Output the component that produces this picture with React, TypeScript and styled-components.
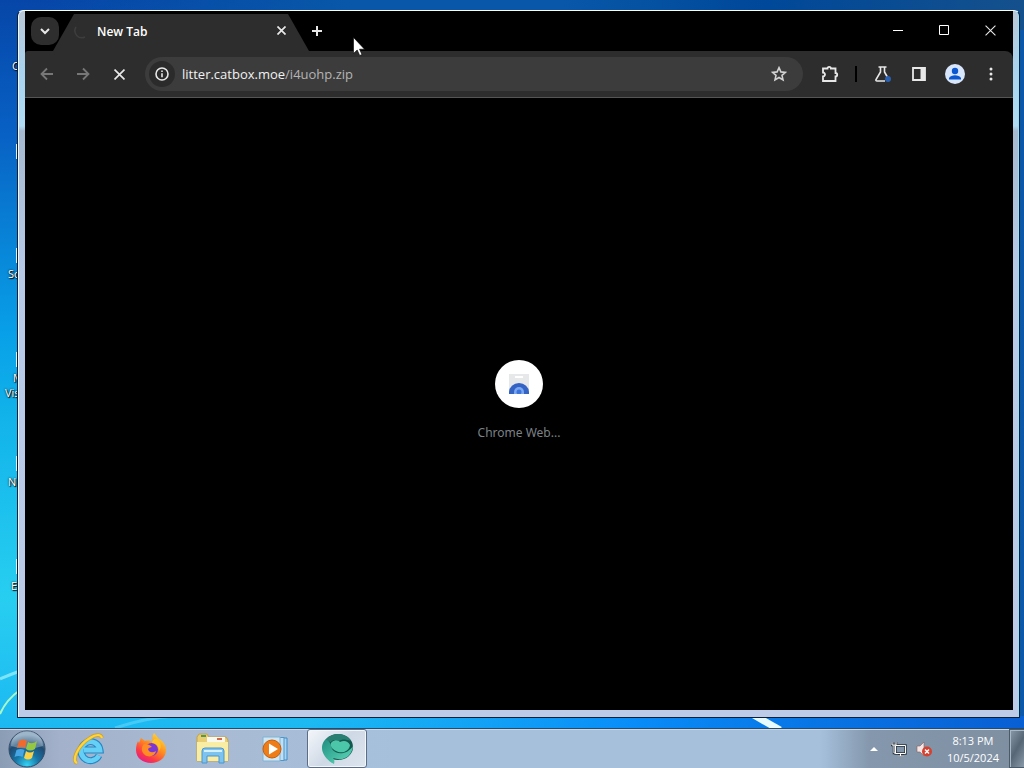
import React from 'react';
import styled, { createGlobalStyle, css } from 'styled-components';

const GlobalStyle = createGlobalStyle`
  *, *::before, *::after { box-sizing: border-box; }
  body { margin: 0; font-family: "Open Sans", "Noto Sans", sans-serif; font-size: 12px; }
  button, input { font: inherit; }
`;

const Screen = styled.div`
  display: flex;
  flex-direction: column;
  height: 100vh;
  overflow: hidden;
`;

const Desktop = styled.main`
  position: relative;
  flex: 1;
  overflow: hidden;
  background:
    linear-gradient(90deg, transparent 30%, rgba(4, 130, 250, 0.8) 62%, rgba(8, 96, 216, 0.9) 100%) bottom / 100% 12px no-repeat,
    linear-gradient(90deg, transparent 4%, #0857a8 34%, #0857a8 55%, #004899 75%, #14508c 100%) top / 100% 30px no-repeat,
    linear-gradient(90deg, transparent 60%, #0d57a8 100%),
    linear-gradient(180deg, #0646a8 0%, #0860c4 18%, #0878d0 28%, #08a0e8 46%, #12b4ea 58%, #28cef0 82%, #1cb8f2 100%);
`;

const Wallpaper = styled.svg`
  position: absolute;
  left: 0;
  bottom: 0;
  width: 100%;
  height: 100px;
`;

const Shortcut = styled.div<{ $x: number; $y: number }>`
  position: absolute;
  left: ${p => p.$x}px;
  top: ${p => p.$y}px;
  color: #fff;
  font-size: 11px;
  line-height: 14px;
  text-shadow: 1px 1px 1px #000, 0 0 2px #000;
`;

const ShortcutEdge = styled.div<{ $y: number }>`
  position: absolute;
  left: 16px;
  top: ${p => p.$y}px;
  width: 2px;
  height: 15px;
  background: #dff2fb;
`;

const Window = styled.section`
  position: absolute;
  inset: 10px 4px 10px 17px;
  display: flex;
  flex-direction: column;
  padding: 0 6px 7px 7px;
  border: 1px solid #0c2038;
  border-top-color: #fff;
  border-radius: 6px 6px 0 0;
  background: linear-gradient(180deg, #b9c7d6 0, #a9d3ef 60px, #b0dcf5 115px, #a5b9d0 120px, #b6cae8 260px, #bccbe8 100%);
  box-shadow: inset 1px 0 0 #eef6fd, inset -1px 0 0 #8fe0f8;
`;

const TitleBar = styled.header`
  display: flex;
  align-items: flex-start;
  height: 40px;
  padding-left: 6px;
  background: #000;
`;

const iconButton = css`
  display: flex;
  align-items: center;
  justify-content: center;
  flex: none;
  padding: 0;
  border: 0;
  background: none;
  color: #e8e8e8;
`;

const TabSearch = styled.button`
  ${iconButton}
  width: 28px;
  height: 28px;
  margin-top: 6px;
  border-radius: 10px;
  background: #2e2e2e;
`;

const Tab = styled.div`
  display: flex;
  align-items: center;
  width: 256px;
  height: 37px;
  margin: 3px 0 0 -6px;
  padding: 0 18px 4px 20px;
  background: #2d2d2d;
  clip-path: polygon(21px 0, 235px 0, 256px 100%, 0 100%);
  color: #fff;
`;

const TabTitle = styled.span`
  flex: 1;
  padding: 2px 0 0 8px;
  font-weight: 600;
  line-height: 16px;
`;

const TabButton = styled.button`
  ${iconButton}
  width: 20px;
  height: 20px;
`;

const NewTab = styled.button`
  ${iconButton}
  width: 28px;
  height: 28px;
  margin: 6px 0 0 -6px;
`;

const Caption = styled.div`
  display: flex;
  margin-left: auto;
`;

const CaptionButton = styled.button`
  ${iconButton}
  width: 46px;
  height: 38px;
`;

const ToolbarBack = styled.div`
  background: #000;
`;

const Toolbar = styled.nav`
  display: flex;
  align-items: center;
  height: 47px;
  padding: 0 8px;
  border-bottom: 1px solid #555;
  border-radius: 3px 8px 0 0;
  background: #2d2d2d;
`;

const ToolButton = styled.button<{ $dim?: boolean }>`
  ${iconButton}
  width: 28px;
  height: 28px;
  margin-right: 8px;
  color: ${p => (p.$dim ? '#777' : '#e8e8e8')};
  &:last-child { margin-right: 0; }
`;

const AddressBar = styled.div`
  position: relative;
  display: flex;
  flex: 1;
  align-items: center;
  height: 34px;
  margin: 0 13px 0 4px;
  padding: 0 14px 0 4px;
  border-radius: 17px;
  background: #3c3c3c;
`;

const SiteInfo = styled.button`
  ${iconButton}
  width: 26px;
  height: 26px;
  border-radius: 50%;
  background: #2b2b2b;
`;

const Url = styled.a`
  flex: 1;
  padding-left: 7px;
  color: #b4b4b4;
  font-size: 13px;
  line-height: 18px;
  text-decoration: none;
`;

const Host = styled.span`
  color: #f1f1f1;
`;

const Divider = styled.span`
  width: 2px;
  height: 16px;
  margin: 0 12px 0 3px;
  background: #000;
`;

const Page = styled.div`
  display: flex;
  flex: 1;
  flex-direction: column;
  align-items: center;
  justify-content: center;
  padding-bottom: 7px;
  background: #000;
`;

const WebStore = styled.a`
  display: flex;
  flex-direction: column;
  align-items: center;
  gap: 16px;
  color: #7d8287;
  font-family: "Noto Sans", sans-serif;
  font-size: 12px;
  line-height: 18px;
  text-decoration: none;
`;

const StoreIcon = styled.span`
  display: flex;
  align-items: center;
  justify-content: center;
  width: 48px;
  height: 48px;
  border-radius: 50%;
  background: #fff;
`;

const Pointer = styled.svg`
  position: absolute;
  left: 335px;
  top: 26px;
`;

const Taskbar = styled.footer`
  display: flex;
  align-items: stretch;
  height: 40px;
  border-top: 1px solid #294b6b;
  background: linear-gradient(90deg, #8b9cb5 0, #a3b1ca 60px, #a9b9d2 180px, #a6c0dc 400px, #a6c0dc 820px, #8497ac 870px, #7f8fa1 100%);
  box-shadow: inset 0 1px 0 #c9d9e8;
`;

const StartButton = styled.button`
  ${iconButton}
  width: 54px;
  margin-right: 5px;
`;

const TaskButton = styled.button<{ $active?: boolean }>`
  ${iconButton}
  width: 60px;
  margin-right: 2px;
  ${p => p.$active && css`
    border: 1px solid #5d6d84;
    border-radius: 3px;
    background: linear-gradient(135deg, #f4f7fb, #cfd9e6 50%, #dde5ee);
    box-shadow: inset 0 0 0 1px #f3f7fb;
  `}
`;

const Tray = styled.div`
  display: flex;
  align-items: center;
  gap: 8px;
  margin-left: auto;
`;

const TrayButton = styled.button`
  ${iconButton}
  width: 17px;
  height: 18px;
`;

const Clock = styled.time`
  padding: 1px 2px 0 6px;
  color: #fff;
  font-size: 11px;
  line-height: 17px;
  text-align: center;
`;

const ShowDesktop = styled.button`
  width: 15px;
  align-self: stretch;
  padding: 0;
  border: 1px solid #4c5a68;
  border-right: 0;
  background: linear-gradient(120deg, #8b9aa9, #566675 50%, #8a9aa8);
  box-shadow: inset 1px 1px 0 #a9b8c6;
`;

const shortcuts = [
  { label: 'C', x: 12, y: 59 },
  { label: 'Sc', x: 8, y: 267 },
  { label: 'M', x: 13, y: 371 },
  { label: 'Vis', x: 5, y: 386 },
  { label: 'N', x: 8, y: 475 },
  { label: 'E', x: 11, y: 579 },
];

const edges = [144, 248, 352, 456, 559];

const Cross = ({ size, weight }: { size: number; weight: number }) => (
  <svg width={size} height={size} viewBox="0 0 10 10" fill="none" stroke="currentColor" strokeWidth={weight}>
    <path d="M.5.5l9 9M9.5.5l-9 9" />
  </svg>
);

const Arrow = ({ flip }: { flip?: boolean }) => (
  <svg width="14" height="14" viewBox="0 0 14 14" fill="none" stroke="currentColor" strokeWidth="1.8">
    <path d={flip ? 'M1 7h11M7 1.5L12.5 7 7 12.5' : 'M13 7H2M7 1.5L1.5 7 7 12.5'} />
  </svg>
);

const StartOrb = () => (
  <svg width="38" height="38" viewBox="0 0 38 38">
    <defs>
      <radialGradient id="orb" cx="50%" cy="95%" r="85%">
        <stop offset="0" stopColor="#35d3f5" />
        <stop offset=".4" stopColor="#1674a5" />
        <stop offset=".75" stopColor="#204a70" />
        <stop offset="1" stopColor="#7f9cb6" />
      </radialGradient>
    </defs>
    <circle cx="19" cy="19" r="18" fill="url(#orb)" stroke="#334d68" />
    <path d="M3 16a16 15 0 0132 0q-16 5-32 0z" fill="#d9e8f2" opacity=".35" />
    <path d="M11 11q4-3 8 0l-2 7q-4-2-8 0z" fill="#ef6a2c" />
    <path d="M20 12q4 3 9-1l-2 8q-5 3-9 0z" fill="#95c842" />
    <path d="M8.500 20q4-2 8 0l-2 7q-4-2-8 0z" fill="#47a5e4" />
    <path d="M18 21q4 3 8 0l-2 7q-4 3-8 0z" fill="#fbd146" />
  </svg>
);

const ExplorerE = () => (
  <svg width="34" height="34" viewBox="0 0 34 34" fill="none">
    <path d="M27 23.500A9.500 9.500 0 1128 18H12" stroke="#2486c4" strokeWidth="7" />
    <path d="M27 23.500A9.500 9.500 0 1128 18H12" stroke="#66cff5" strokeWidth="4.800" />
    <path d="M5 31C-1 29 6 13 18 6c6-4 11-4 12 0" stroke="#d79c14" strokeWidth="3.500" />
    <path d="M5 31C-1 29 6 13 18 6c6-4 11-4 12 0" stroke="#fbd63f" strokeWidth="2.200" />
  </svg>
);

const Firefox = () => (
  <svg width="32" height="34" viewBox="0 0 32 34">
    <defs>
      <linearGradient id="fox" x1=".85" y1="0" x2=".2" y2="1">
        <stop offset="0" stopColor="#ffe436" />
        <stop offset=".45" stopColor="#ff8a1f" />
        <stop offset=".75" stopColor="#fb3a48" />
        <stop offset="1" stopColor="#e2188c" />
      </linearGradient>
    </defs>
    <path d="M19 1c2 2 3 4 5 6 4 2 7 6 7 11 0 8-7 13-15 13S1 26 1 18c0-4 1-7 2-9l1 2 2-5 4 3c3-1 6 0 8 1-1-3-1-6 1-9z" fill="url(#fox)" />
    <circle cx="16.500" cy="17.500" r="6.500" fill="#7a37d6" />
    <path d="M9 12c4 0 6 1 8 3-2 0-3 1-4 2 1 4 5 4 8 2-1 5-7 7-11 4-4-3-4-8-1-11z" fill="#ff8c24" />
    <path d="M17 11c5 0 7 4 7 8 3-4 2-9-2-12-2-1-5 1-5 4z" fill="#ffc22e" />
  </svg>
);

const Folder = () => (
  <svg width="34" height="32" viewBox="0 0 34 32">
    <path d="M1 4l2-3h8l2 3h17l2 3v21H1z" fill="#e9cd72" stroke="#c5a548" />
    <path d="M5 2h5v2H5z" fill="#4d9a50" />
    <path d="M11 4h18v5H11z" fill="#f7f9ef" />
    <path d="M21 5h5v2h-5z" fill="#d66b4c" />
    <path d="M1 9h31v19H1z" fill="#f9eca3" />
    <path d="M6 30V18q0-3 3-3h16q3 0 3 3v12h-5v-7H11v7z" fill="#7ec2ee" stroke="#4a96cf" />
    <path d="M8 18h18" stroke="#d6f0fd" strokeWidth="2" />
  </svg>
);

const MediaPlayer = () => (
  <svg width="28" height="28" viewBox="0 0 28 28">
    <path d="M12 3h14v22H12z" fill="#a7d4f1" stroke="#3f8dc5" />
    <path d="M9 2.500h14v23H9z" fill="#bfe0f5" stroke="#4c96c9" />
    <path d="M2 2h17v24H2z" fill="#cfe6f4" stroke="#81b2d3" />
    <circle cx="11" cy="14" r="9" fill="#ee7d18" stroke="#c65c0c" />
    <path d="M8 8.500l9 5.500-9 5.500z" fill="#fff" />
  </svg>
);

const Chromium = () => (
  <svg width="36" height="34" viewBox="0 0 36 34">
    <defs>
      <linearGradient id="wing" x1="0" y1="0" x2="1" y2="1">
        <stop offset="0" stopColor="#1f8f80" />
        <stop offset="1" stopColor="#62dcbd" />
      </linearGradient>
    </defs>
    <ellipse cx="19" cy="15" rx="15" ry="13" fill="#14594f" />
    <path d="M7 7C0 13 2 25 15 32c1-3 0-5-1-6 12 4 19-3 20-12-5 8-16 10-21 3-1-4-2-8-6-10z" fill="url(#wing)" />
    <path d="M7 7c7-7 20-7 25 2-6-2-9-2-12 0-3-1-6-2-8 1-2 0-3-1-5-3z" fill="#2a7f73" />
    <path d="M12 11c3-4 7-3 9-1 4-2 8-1 10 3-1 7-9 9-14 6-4-2-6-5-5-8z" fill="#4cc6a8" />
  </svg>
);

export default function App() {
  return (
    <Screen>
      <GlobalStyle />
      <Desktop>
        <Wallpaper viewBox="0 0 1024 100" preserveAspectRatio="none" fill="none">
          <path d="M0 51Q9 47 20 43" stroke="#a4f3fb" strokeWidth="3" opacity=".7" />
          <path d="M0 86Q6 72 20 62" stroke="#a8f7c6" strokeWidth="2" />
          <path d="M115 100q30-10 60-12" stroke="#87e4fa" strokeWidth="3" opacity=".4" />
          <path d="M752 86l28 16" stroke="#e8fbff" strokeWidth="7" />
        </Wallpaper>
        {edges.map(y => <ShortcutEdge key={y} $y={y} />)}
        {shortcuts.map(s => <Shortcut key={s.label} $x={s.x} $y={s.y}>{s.label}</Shortcut>)}
        <Window aria-label="Browser">
          <TitleBar>
            <TabSearch aria-label="Search tabs">
              <svg width="10" height="7" viewBox="0 0 10 7" fill="none" stroke="currentColor" strokeWidth="2"><path d="M1 1l4 4 4-4" /></svg>
            </TabSearch>
            <Tab>
              <svg width="16" height="16" viewBox="0 0 16 16" fill="none" stroke="#3d3d3d" strokeWidth="1.500"><path d="M3 4a7 7 0 009 10" /></svg>
              <TabTitle>New Tab</TabTitle>
              <TabButton aria-label="Close tab"><Cross size={9} weight={1.9} /></TabButton>
            </Tab>
            <NewTab aria-label="New tab">
              <svg width="10" height="10" viewBox="0 0 10 10" stroke="currentColor" strokeWidth="2"><path d="M5 0v10M0 5h10" /></svg>
            </NewTab>
            <Caption>
              <CaptionButton aria-label="Minimize">
                <svg width="10" height="10" viewBox="0 0 10 10" stroke="#fff"><path d="M0 5.500h10" /></svg>
              </CaptionButton>
              <CaptionButton aria-label="Maximize">
                <svg width="10" height="10" viewBox="0 0 10 10" fill="none" stroke="#fff"><path d="M.5.5h9v9h-9z" /></svg>
              </CaptionButton>
              <CaptionButton aria-label="Close"><Cross size={11} weight={1} /></CaptionButton>
            </Caption>
          </TitleBar>
          <ToolbarBack>
            <Toolbar>
              <ToolButton $dim aria-label="Back"><Arrow /></ToolButton>
              <ToolButton $dim aria-label="Forward"><Arrow flip /></ToolButton>
              <ToolButton aria-label="Stop"><Cross size={11} weight={1.5} /></ToolButton>
              <AddressBar>
                <SiteInfo aria-label="Site information">
                  <svg width="14" height="14" viewBox="0 0 14 14" fill="none" stroke="currentColor" strokeWidth="1.600"><circle cx="7" cy="7" r="6" /><path d="M7 6.200v4M7 3.500v1.600" /></svg>
                </SiteInfo>
                <Url href="#"><Host>litter.catbox.moe</Host>/i4uohp.zip</Url>
                <TabButton aria-label="Bookmark">
                  <svg width="16" height="16" viewBox="0 0 16 16" fill="none" stroke="#d2d2d2" strokeWidth="1.600"><path d="M8 1.700l1.900 4.200 4.500.5-3.400 3 1 4.500-4-2.400-4 2.400 1-4.500-3.400-3 4.500-.5z" /></svg>
                </TabButton>
              </AddressBar>
              <ToolButton aria-label="Extensions">
                <svg width="18" height="18" viewBox="0 0 18 18" fill="none" stroke="currentColor" strokeWidth="1.800"><path d="M2 3.500h4.500a1.700 1.700 0 013.400 0H14.500V8a1.700 1.700 0 010 3.400V16H2v-4.500a2 2 0 000-4z" /></svg>
              </ToolButton>
              <Divider />
              <ToolButton aria-label="Experiments">
                <svg width="18" height="18" viewBox="0 0 18 18" fill="none" stroke="currentColor" strokeWidth="1.600"><path d="M4.500 2h8M6.500 2v5L2 14.500q-.5 1.500 1 1.500h8M10.500 2v5l4 7" /><circle cx="14" cy="14" r="3" fill="#2a60b0" stroke="none" /></svg>
              </ToolButton>
              <ToolButton aria-label="Side panel">
                <svg width="14" height="14" viewBox="0 0 14 14" fill="none" stroke="currentColor" strokeWidth="1.800"><path d="M1 1h12v12H1z" /><path d="M8.500 1H13v12H8.500z" fill="currentColor" stroke="none" /></svg>
              </ToolButton>
              <ToolButton aria-label="Profile">
                <svg width="20" height="20" viewBox="0 0 20 20"><circle cx="10" cy="10" r="10" fill="#d8e6fc" /><circle cx="10" cy="7" r="3.200" fill="#0b57d0" /><path d="M4 15.500v-1.500c1-2 3.500-2.800 6-2.800s5 .8 6 2.800v1.500z" fill="#0b57d0" /></svg>
              </ToolButton>
              <ToolButton aria-label="Menu">
                <svg width="4" height="14" viewBox="0 0 4 14" fill="currentColor"><circle cx="2" cy="2" r="1.500" /><circle cx="2" cy="7" r="1.500" /><circle cx="2" cy="12" r="1.500" /></svg>
              </ToolButton>
            </Toolbar>
          </ToolbarBack>
          <Page>
            <WebStore href="#">
              <StoreIcon>
                <svg width="22" height="20" viewBox="0 0 22 20"><path d="M1 0h20v20H1z" fill="#e6e8ea" /><path d="M7 2h8v2H7z" fill="#fff" /><path d="M1 20v-2a10 9 0 0120 0v2z" fill="#3563c4" /><path d="M6 20v-2a5 5 0 0110 0v2z" fill="#7ba7f0" /><circle cx="11" cy="18" r="2.500" fill="#3c74dd" /></svg>
              </StoreIcon>
              Chrome Web...
            </WebStore>
          </Page>
          <Pointer width="12" height="19" viewBox="0 0 12 19"><path d="M.5.5v16l3.700-3.500 2.500 5.500 2.300-1-2.500-5.300h5z" fill="#fff" stroke="#000" strokeWidth=".6" /></Pointer>
        </Window>
      </Desktop>
      <Taskbar>
        <StartButton aria-label="Start"><StartOrb /></StartButton>
        <TaskButton aria-label="Internet Explorer"><ExplorerE /></TaskButton>
        <TaskButton aria-label="Firefox"><Firefox /></TaskButton>
        <TaskButton aria-label="File Explorer"><Folder /></TaskButton>
        <TaskButton aria-label="Media Player"><MediaPlayer /></TaskButton>
        <TaskButton $active aria-label="Chromium"><Chromium /></TaskButton>
        <Tray>
          <TrayButton aria-label="Show hidden icons">
            <svg width="8" height="4" viewBox="0 0 8 4"><path d="M0 4l4-4 4 4z" fill="#fff" /></svg>
          </TrayButton>
          <TrayButton aria-label="Network">
            <svg width="16" height="16" viewBox="0 0 16 16" fill="none"><path d="M4.500 4.500h10v8h-10zM1 1v3h4V1M3 4v8h2M7 15h6M9.500 13v2" stroke="#29343f" strokeWidth="2.500" /><path d="M4.500 4.500h10v8h-10zM1 1v3h4V1M3 4v8h2M7 15h6M9.500 13v2" stroke="#fff" /></svg>
          </TrayButton>
          <TrayButton aria-label="Volume muted">
            <svg width="17" height="16" viewBox="0 0 17 16"><path d="M1 5h3l4-4v14l-4-4H1z" fill="#f5e6e4" stroke="#86605f" strokeWidth=".6" /><circle cx="11" cy="10.500" r="5" fill="#d5402f" /><path d="M9 8.500l4 4m0-4l-4 4" stroke="#fff" strokeWidth="1.500" /></svg>
          </TrayButton>
          <Clock>8:13 PM<br />10/5/2024</Clock>
          <ShowDesktop aria-label="Show desktop" />
        </Tray>
      </Taskbar>
    </Screen>
  );
}
